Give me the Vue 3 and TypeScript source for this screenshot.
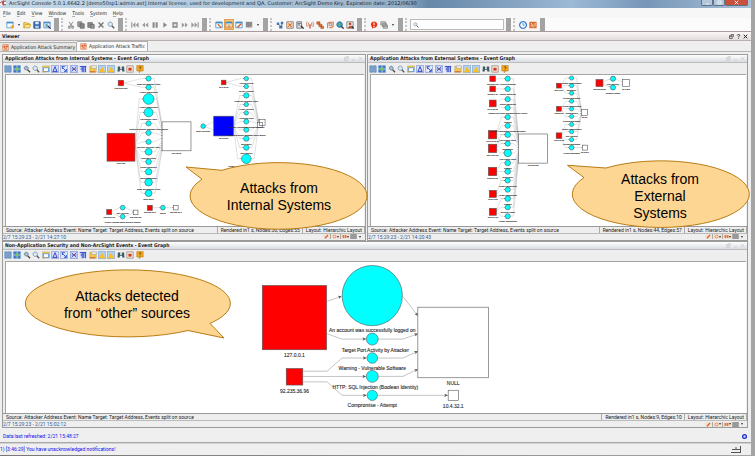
<script setup lang="ts">
interface Shape { d: string; f?: string; s?: string; w?: number }
interface Circle { x: number; y: number; r: number; label?: string; dy?: number; dx?: number }
interface Box { x: number; y: number; s: number; fill: string; label?: string }
interface Graph { view: string; height: number; font: number; circles: Circle[]; boxes: Box[]; edges: string[] }
interface Callout { view: string; w: number; h: number; d: string; x: number; y: number; lines: string[] }
interface Panel {
  id: string; title: string; stats: string; time: string; graph: Graph; callout: Callout
}

const win = 'M1 1.5H9V8.5H1Z'
const icons: Record<string, Shape[]> = {
  newWin: [{ d: win, f: '#f4f9fd', s: '#5b9bd0' }, { d: 'M1 1H9V3H1Z', f: '#4a90cc' }, { d: 'M8 5V9.5M5.8 7.2H10', s: '#f0a020', w: 1.5 }],
  open: [{ d: 'M1 8.5V2H4L5 3H8V4.5', f: '#f8dc70', s: '#c89a20' }, { d: 'M1 8.5L3 4.5H9.8L8 8.5Z', f: '#ffe98c', s: '#c89a20' }],
  save: [{ d: 'M1 1H9V9H1Z', f: '#3c6eb0', s: '#28508a' }, { d: 'M2.8 1H7.2V4H2.8Z', f: '#dce8f4' }, { d: 'M2.8 6H7.2V9H2.8Z', f: '#b8cce0' }],
  saveWin: [{ d: win, f: '#e8f2fa', s: '#4a88c0' }, { d: 'M1 1H9V3H1Z', f: '#4a90cc' }, { d: 'M3 4H6V7H3Z', f: '#58a0a0' }, { d: 'M6 6L9.5 9.5', s: '#226', w: 1.4 }],
  cut: [{ d: 'M2.5 1L6.8 7M7.5 1L3.2 7', s: '#777' }, { d: 'M2 6.5H4V9H2ZM6 6.5H8V9H6Z', s: '#777' }],
  copy: [{ d: 'M1 1H6V7H1Z', f: '#999', s: '#777' }, { d: 'M4 3.5H9V9H4Z', f: '#888', s: '#666' }],
  paste: [{ d: 'M1 2H7V8H1Z', f: '#888', s: '#777' }, { d: 'M4.5 4.5H9V9H4.5Z', f: '#999', s: '#666' }],
  del: [{ d: 'M2 2L8 8M8 2L2 8', s: '#777', w: 1.8 }],
  find: [{ d: 'M4 1.2A2.8 2.8 0 1 0 4.1 1.2Z', f: '#d8e8f4', s: '#7890a8' }, { d: 'M6 6L9 9', s: '#555', w: 1.6 }],
  first: [{ d: 'M1 1.5V8.5', s: '#888', w: 1.2 }, { d: 'M5.5 1.5V8.5L2 5ZM9.5 1.5V8.5L6 5Z', f: '#999' }],
  rew: [{ d: 'M5 1.8V8.2L1.5 5ZM9 1.8V8.2L5.5 5Z', f: '#999' }],
  pause: [{ d: 'M2 1.5H4.5V8.5H2ZM5.8 1.5H8.3V8.5H5.8Z', f: '#888' }],
  play: [{ d: 'M3 1.5L7.5 5L3 8.5Z', f: '#888' }],
  stop: [{ d: 'M2.5 2.5H7.5V7.5H2.5Z', f: '#ddd', s: '#888', w: 1.6 }],
  fwd: [{ d: 'M1 1.8V8.2L4.5 5ZM5 1.8V8.2L8.5 5Z', f: '#999' }],
  last: [{ d: 'M.5 1.5V8.5L4 5ZM4.5 1.5V8.5L8 5Z', f: '#999' }, { d: 'M9 1.5V8.5', s: '#888', w: 1.2 }],
  winCursor: [{ d: win, f: '#fff', s: '#3c8cc8' }, { d: 'M1 1H9V3H1Z', f: '#3c8cc8' }, { d: 'M3.5 4L7.5 8', s: '#d06020', w: 1.6 }],
  winList: [{ d: win, f: '#f8efe0', s: '#c87828' }, { d: 'M1 1H9V3H1Z', f: '#3c8cc8' }, { d: 'M3 5H7M3 7H7', s: '#c87828' }],
  winEdit: [{ d: win, f: '#fff', s: '#3c8cc8' }, { d: 'M1 1H9V3H1Z', f: '#3c8cc8' }, { d: 'M3 8L8 3.5', s: '#d06020', w: 1.8 }],
  winGray: [{ d: 'M1 1H9V8H1Z', f: '#8c8c8c' }, { d: 'M5 9.5L9.5 5', s: '#bbb', w: 1.2 }],
  nodes: [{ d: 'M1 2H4V5H1ZM6 1H9V4H6ZM4 6H8V9.5H4Z', f: '#3c78b8' }, { d: 'M3 4L6 7L8 3', s: '#446', w: .8 }],
  badge: [{ d: 'M1 1H9V9H1Z', f: '#f8eee4', s: '#806050' }, { d: 'M2.5 7L7.5 3M3 3L7 7.5', s: '#e06a20', w: 1.5 }],
  docFind: [{ d: 'M1 1H7V9H1Z', f: '#dde4dc', s: '#667' }, { d: 'M2 3H6M2 5H5', s: '#556' }, { d: 'M6 6L9.5 9.5', s: '#333', w: 1.6 }],
  antenna: [{ d: 'M5 4V9.5', s: '#c04020', w: 1.5 }, { d: 'M3.5 2Q2 4 3.5 6M6.5 2Q8 4 6.5 6M1.5 1Q-.5 4 1.5 7.5M8.5 1Q10.5 4 8.5 7.5', s: '#c06040', w: .9 }],
  chain: [{ d: 'M1 1H5V4H1ZM3.5 4H7.5V7H3.5ZM6 6.5H9.5V9.5H6Z', f: '#e07030', s: '#a04418', w: .6 }],
  loop: [{ d: 'M2 9V4Q2 1.5 5 1.5H9V5Q9 8.5 5 8.5H4', s: '#e07a38', w: 1.4 }, { d: 'M4 3H7V6H4Z', f: '#dde8f0', s: '#889' }],
  globe: [{ d: 'M4.5 1A3.5 3.5 0 1 0 4.6 1Z', f: '#3c98d8', s: '#2868a0' }, { d: 'M2.5 3L5 2.5L6 5L4 7Z', f: '#60b848' }, { d: 'M6.5 6.5L9.5 9.5', s: '#333', w: 1.6 }],
  user: [{ d: 'M1 1H9V9H1Z', f: '#eee', s: '#777' }, { d: 'M5 2A1.7 1.7 0 1 0 5.1 2ZM2 9Q5 3.5 8 9Z', f: '#b84a28' }, { d: 'M7 6L9.5 9.5', s: '#223', w: 1.4 }],
  alert: [{ d: 'M5 .5A4.2 4 0 1 1 4 8.4L2.5 9.8V7.5A4.2 4 0 0 1 5 .5Z', f: '#ee3010' }, { d: 'M5 2V5.2M5 6.2V7.4', s: '#fff', w: 1.4 }],
  stack: [{ d: 'M1 1H7V5H1ZM3 3H8V7H3ZM4 5H9.5V9H4Z', f: '#c8ccd0', s: '#888' }],
  clock: [{ d: 'M5 .8A4.2 4.2 0 1 0 5.1 .8Z', f: '#fff', s: '#2c78d0', w: 1.5 }, { d: 'M5 2.5V5.2H7.2', s: '#2c78d0' }],
  flag: [{ d: 'M.5 1H9.5V9H.5Z', f: '#d86830' }, { d: 'M2.5 2.5L4 4L2.5 7M7.5 2.5V7M5 4.5V8', s: '#f8e0c0', w: 1.2 }],
  tab: [{ d: 'M1 1H9V9H1Z', f: '#fbe8dc', s: '#d07850' }, { d: 'M2.5 3H4.5V5H2.5ZM6 2.5H7.7V4.5H6ZM3 6L7.5 8M7.5 5.5L3 8', f: '#d85a20', s: '#d85a20', w: .9 }],
  cols: [{ d: 'M1 1H4.3V9H1ZM5.5 1H9V9H5.5Z', f: '#7ba3d0', s: '#4a7ab0', w: .7 }],
  fit: [{ d: 'M.5 .5H9.5V9.5H.5Z', f: '#3d78c8' }, { d: 'M3 3H7V7H3Z', f: '#7cc860' }, { d: 'M.5 5H3M7 5H9.5M5 .5V3M5 7V9.5', s: '#cfe4ff', w: 1 }],
  zoomIn: [{ d: 'M4 1.5A2.4 2.4 0 1 0 4.1 1.5Z', f: '#a8c0d4', s: '#607890' }, { d: 'M5.8 6L8.8 9', s: '#444', w: 1.6 }],
  image: [{ d: 'M.5 1H9.5V9H.5Z', f: '#6aa4dc' }, { d: 'M.5 1H9.5V3H.5Z', f: '#f0c040' }, { d: 'M2.5 4H7.5V7.5H2.5Z', f: '#fff' }, { d: 'M.5 8.5H4', s: '#f09830', w: 1.5 }],
  hier: [{ d: 'M.5 .5H9.5V9.5H.5Z', f: '#d8e0fa', s: '#6a80c8', w: .7 }, { d: 'M5 2L2.5 8M5 2L7.5 8M2 8H8', s: '#2038c0', w: 1.1 }],
  ortho: [{ d: 'M.5 .5H9.5V9.5H.5Z', f: '#dfe6fa', s: '#6a80c8', w: .7 }, { d: 'M2 2L8 8M3 5V2H6M5 8H8V5', s: '#2850c8', w: 1.1 }],
  mesh: [{ d: 'M.5 .5H9.5V9.5H.5Z', f: '#cdd8fa', s: '#6a80c8', w: .7 }, { d: 'M2 2L8 8M8 2L2 8M2 5H8', s: '#3a58d0', w: 1.1 }, { d: 'M4 4H6V6H4Z', f: '#c04040' }],
  tree: [{ d: 'M.5 .5H9.5V9.5H.5Z', f: '#dde4fb' }, { d: 'M1 2H9M4 2V9M6 2V9M8 2V9M2 5H4', s: '#2842c4', w: 1.2 }],
  folder: [{ d: 'M1 1.5H9V9H1Z', f: '#f4c84c', s: '#b89050', w: .6 }, { d: 'M3 1H9.5V4H3Z', f: '#f8f0dc', s: '#8898b0', w: .6 }, { d: 'M1 8.5H8', s: '#d06838', w: 1.4 }],
  warn: [{ d: 'M.5 .5H9.5V9.5H.5Z', f: '#b4d0ee', s: '#5a88c0', w: .6 }, { d: 'M5 2L9 9H1Z', f: '#f8c020' }],
  bino: [{ d: 'M1 2H4V5H6V2H9V5L9.5 8H6.5V6H3.5V8H.5L1 5Z', f: '#3c5a62' }],
  rec: [{ d: 'M1 1H9V9H1Z', f: '#f2e6e0', s: '#8c7a70', w: .8 }, { d: 'M3 3.5H7V7H3Z', f: '#d83818' }],
  help: [{ d: 'M1 .5H9V7.5H6L4 9.8V7.5H1Z', f: '#f4a820', s: '#b07010', w: .6 }, { d: 'M3.5 2.8Q5 1.4 6.3 2.8Q6.3 4 5 4.5V5.2M5 6V7', s: '#5a3800', w: .9 }],
  float: [{ d: 'M3.5 1H9V5.5M1 3.5H6.5V9H1ZM1 4.5H6.5', s: 'currentColor', w: 1.2 }],
  question: [{ d: 'M2.5 3Q2.5 1 5 1Q7.5 1 7.5 3Q7.5 4.5 5 5.2V6.5M5 7.8V9.2', s: 'currentColor', w: 1.6 }],
  min: [{ d: 'M2 8H8', s: 'currentColor', w: 1.5 }],
  close: [{ d: 'M1.5 1.5L8.5 8.5M8.5 1.5L1.5 8.5', s: 'currentColor', w: 2 }],
  max: [{ d: 'M2 2H8V8H2Z', s: 'currentColor', w: 1.5 }],
}

const menus: string[] = ['File', 'Edit', 'View', 'Window', 'Tools', 'System', 'Help']
const groups: string[][] = [
  ['newWin', 'drop', 'open', 'save', 'saveWin'],
  ['cut', 'copy', 'paste', 'del', 'find'],
  ['first', 'rew', 'pause', 'play', 'stop', 'fwd', 'last'],
  ['winCursor', 'winList', 'winEdit', 'winGray', 'drop'],
  ['nodes', 'badge', 'docFind', 'antenna', 'chain', 'loop', 'globe', 'user'],
  ['alert', 'stack', 'drop'],
  ['search'],
  ['clock', 'flag'],
]
const graphTools: string[] = ['cols', 'fit', 'zoomIn', 'find', 'image', 'hier', 'ortho', 'mesh', 'tree', 'folder', 'warn', 'warn', 'bino', 'rec', 'help']

const RED = '#ff0000'
const BLUE = '#0000ff'
const WHITE = '#ffffff'

function column(x: number, rows: [number, number, string][]): Circle[] {
  return rows.map(([y, r, label]) => ({ x, y, r, label }))
}
// Links every circle of a column to the left side of a box, spread over its height.
function fan(list: Circle[], x: number, top: number, bottom: number): string[] {
  const step = list.length > 1 ? (bottom - top) / (list.length - 1) : 0
  return list.map((c, i) => `M${c.x + c.r} ${c.y}L${c.x + c.r + 3} ${c.y}L${x} ${top + i * step}`)
}
function from(x: number, y: number, list: Circle[]): string[] {
  return list.map((c) => `M${x} ${y}L${c.x - c.r - 4} ${c.y}L${c.x - c.r} ${c.y}`)
}

const a = column(148, [
  [78.5, 2.6, 'Cross Site Scripting Attack'], [87.3, 2.6, 'Header Manipulation'], [99, 5.4, 'Header Manipulation'],
  [112.5, 4.5, 'Log Forging Attack'], [123.5, 2.6, 'Method Call Failure Database Query Failure'], [133, 2.6, ''],
  [142, 2.6, 'Directory Traversal Attack'], [152, 3.4, 'Directory Listing'], [162, 2.8, 'Cookie Tampering'],
  [172, 3.2, 'Forceful Browsing'], [182.5, 3.8, 'Cross Site Scripting Attack'], [193.5, 3.4, 'Brute Force'],
])
const b = column(246, [
  [78.6, 2.2, 'Account Locked'], [86.5, 2.2, 'Privacy Violation'], [95.5, 2.7, 'Cross Site Scripting Attack'],
  [104.5, 2.2, 'Header Injection'], [113, 2.2, 'Attempted Login'], [121.7, 2.5, 'Possible Authorization Bypass Exception'],
  [130, 2.5, 'Method Call Failure Database Query Failure'], [138.8, 2.7, 'Brute Force'], [147.8, 2.7, 'SQL Injection'],
  [159, 4.8, 'Privacy Violation Social Security Number'],
])
const c = column(507.5, [
  [78.7, 2.6, 'Forceful Browsing'], [89, 2.6, 'Cookie Tampering'], [99.3, 2.6, 'Cookie Tampering'],
  [108, 2.6, 'Method Call Failure Database Query Failure'], [117.3, 2.6, 'Phishing'], [126, 2.6, 'Possible Authorization Bypass Exception'],
  [135, 2.8, 'Log Forging Attack'], [144, 2.6, 'Brute Force'], [153.4, 3.7, 'Log Forging Attack'], [163.4, 2.8, 'Phishing'],
  [172, 2.8, 'Brute Force'], [181, 2.6, 'Header Manipulation'], [190.3, 2.6, 'Header Manipulation'],
  [199.3, 2.8, 'Phishing'], [208, 2.6, 'Directory Listing'], [217, 2.6, 'Header Manipulation'],
])
const d = column(571.7, [
  [78, 2.1, 'System Compromised'], [85.7, 2.1, 'Escalation'], [93.3, 2.1, 'Privilege Escalation'],
  [101.3, 2.1, 'Access Compromised'], [109, 2.1, 'Compromised'], [116.7, 2.1, 'Privilege Escalation'],
  [124.7, 2.1, 'System Compromised'], [132, 2.1, 'SQL Injection'], [140, 2.1, 'Privilege Escalation'], [148, 2.4, 'Account Escalation'],
])

const internal: Graph = {
  view: '5 75 359 151', height: 151, font: 2,
  circles: [...a, ...b,
    { x: 202.7, y: 126.3, r: 2.3, label: 'Buffer Overflow' },
    { x: 122, y: 208, r: 2.4, label: 'SQL Injection' }, { x: 122, y: 217, r: 2.4, label: 'Privacy Violation Social Security Number' },
    { x: 162.3, y: 208, r: 2.4, label: 'Failed' }],
  boxes: [
    { x: 117.5, y: 80.3, s: 5.5, fill: RED, label: '192.168.10.21' }, { x: 106.3, y: 133.4, s: 28, fill: RED, label: '10.0.0.25' },
    { x: 161.5, y: 122, s: 29, fill: WHITE, label: '10.0.20.12' }, { x: 106, y: 210, s: 5, fill: RED, label: '192.168.1.12' },
    { x: 132.7, y: 210.5, s: 4.6, fill: WHITE, label: '192.168.0.20' }, { x: 146.7, y: 205.7, s: 5, fill: RED, label: '192.168.10.2' },
    { x: 173, y: 205.7, s: 4.6, fill: WHITE, label: '192.168.10.3' }, { x: 221, y: 80.2, s: 4.6, fill: RED, label: '10.0.10.15' },
    { x: 213.3, y: 116.3, s: 19.8, fill: BLUE, label: '10.0.10.21' }, { x: 257, y: 122.5, s: 5, fill: WHITE }, { x: 259, y: 119.7, s: 5.8, fill: 'none' }],
  edges: [...from(123, 83, a.slice(0, 2)), ...from(134.3, 145, a.slice(2)), ...fan(a, 161.5, 124, 150),
    ...from(225.7, 82.5, b.slice(0, 2)), ...from(233.2, 126, b.slice(2)), ...fan(b, 258, 120, 127),
    'M213 122L205 126', 'M213 130L205 127', 'M111 212L119 208', 'M111 213L119 217', 'M124.5 208L133 212', 'M124.5 217L133 213',
    'M152 208H160', 'M165 208H173'],
}
const external: Graph = {
  view: '370 75 377 151', height: 151, font: 2,
  circles: [...c, ...d, { x: 613.3, y: 78.7, r: 2.6, label: 'SQL Injection' }, { x: 613.3, y: 87.5, r: 2.6, label: 'Session Fixation' }],
  boxes: [
    { x: 489.5, y: 76, s: 5.6, fill: RED, label: '192.168.1.22' }, { x: 489.5, y: 86.2, s: 5.6, fill: RED, label: '10.168.1.24' },
    { x: 489, y: 100.2, s: 6.8, fill: RED, label: '69.46.23.21' }, { x: 488, y: 130.8, s: 8.4, fill: RED, label: '193.142.12.24' },
    { x: 488, y: 144.6, s: 8.4, fill: RED, label: '201.47.54.72' }, { x: 488, y: 167.8, s: 8.4, fill: RED, label: '65.55.21.12' },
    { x: 489, y: 191, s: 7, fill: RED, label: '12.24.6.20' }, { x: 489, y: 209, s: 7, fill: RED, label: '10.36.74.12' },
    { x: 518.3, y: 134.3, s: 29.3, fill: WHITE, label: '10.0.20.125' },
    { x: 556.5, y: 83.3, s: 4.8, fill: RED, label: '201.47.54' }, { x: 556.5, y: 106.6, s: 4.8, fill: RED, label: '192.20.10' },
    { x: 556.2, y: 133.2, s: 5.6, fill: RED, label: '193.142.12' }, { x: 581.5, y: 109.5, s: 6.2, fill: WHITE, label: '10.0.2' },
    { x: 582.5, y: 145.5, s: 5, fill: WHITE, label: '10.0.20.1' }, { x: 596.2, y: 79.6, s: 7, fill: RED, label: '192.168.20.21' },
    { x: 623, y: 79.6, s: 7, fill: WHITE, label: '10.0.20.1' }],
  edges: [...from(495, 79, c.slice(0, 1)), ...from(495, 89, c.slice(1, 2)), ...from(496, 104, c.slice(2, 4)),
    ...from(496, 134, c.slice(4, 8)), ...from(496, 149, c.slice(6, 9)), ...from(496, 172, c.slice(9, 12)),
    ...from(496, 195, c.slice(11, 14)), ...from(496, 212, c.slice(13)), ...fan(c, 518.3, 138, 160),
    ...from(561, 86, d.slice(0, 3)), ...from(561, 109, d.slice(3, 6)), ...from(561, 136, d.slice(6)), ...fan(d.slice(0, 9), 581.5, 110, 115),
    'M574 148H582', 'M603 82L610 79', 'M603 84L610 87', 'M616 79L623 82', 'M616 87L623 84'],
}
const other: Graph = {
  view: '5 262 742 152', height: 152, font: 5,
  circles: [
    { x: 372.3, y: 295.7, r: 30.2, label: 'An account was successfully logged on', dy: 37 },
    { x: 372.3, y: 339.3, r: 6, label: 'Target Port Activity by Attacker', dx: 3, dy: 13 },
    { x: 372.3, y: 358.3, r: 5.3, label: 'Warning - Vulnerable Software', dy: 12 },
    { x: 372.3, y: 376.7, r: 6, label: 'HTTP: SQL Injection (Boolean Identity)', dx: 3, dy: 13 },
    { x: 372.3, y: 395.7, r: 5.2, label: 'Compromise - Attempt', dy: 12 }],
  boxes: [
    { x: 262, y: 285.5, s: 64.5, fill: RED, label: '127.0.0.1' }, { x: 286, y: 368.8, s: 16.6, fill: RED, label: '92.235.36.96' },
    { x: 418, y: 307.3, s: 70.8, fill: WHITE, label: 'NULL' }, { x: 448.4, y: 390.6, s: 10.2, fill: WHITE, label: '10.4.32.1' }],
  edges: ['M327 301.5L341.5 296.3', 'M327 334L342 339.3H366', 'M303 371.5H327L342 358.3H366.5', 'M303 376.8H366', 'M303 382.2H327L342 395.7H366.5',
    'M403 296.5L418 316', 'M378.5 339.3H403L418 334', 'M378 358.3H403L418 351.5', 'M378.5 376.7H403L418 369.5', 'M378 395.7H448'],
}

const panels: Panel[] = [
  {
    id: 'internal', title: 'Application Attacks from Internal Systems - Event Graph', stats: 'Rendered in1 s, Nodes:36, Edges:55',
    time: '2/7 15:29:23 - 2/21 14:27:10', graph: internal,
    callout: { view: '184 161 185 70', w: 185, h: 70, d: 'M222 171.3L186 168L202 180.2A88.5 33.3 0 1 0 222 171.3Z', x: 279, y: 194, lines: ['Attacks from', 'Internal Systems'] },
  },
  {
    id: 'external', title: 'Application Attacks from External Systems - Event Graph', stats: 'Rendered in1 s, Nodes:44, Edges:57',
    time: '2/7 15:29:23 - 2/21 14:20:43', graph: external,
    callout: { view: '566 160 185 70', w: 185, h: 70, d: 'M606 169L567.5 166.3L584 178.6A88.5 33.3 0 1 0 606 169Z', x: 660, y: 185, lines: ['Attacks from', 'External', 'Systems'] },
  },
  {
    id: 'other', title: 'Non-Application Security and Non-ArcSight Events - Event Graph', stats: 'Rendered in1 s, Nodes:9, Edges:10',
    time: '2/7 15:29:23 - 2/21 15:02:12', graph: other,
    callout: { view: '23 269 209 72', w: 209, h: 72, d: 'M210 324.4L224 339L188 331.5A102.5 33.5 0 1 1 210 324.4Z', x: 127, y: 302, lines: ['Attacks detected', 'from “other” sources'] },
  },
]
const source = 'Source: Attacker Address Event: Name Target: Target Address, Events split on source'
</script>

<template>
  <div class="desktop">
    <div class="window">
      <header class="titlebar">
        <svg class="ico" viewBox="0 0 10 10" aria-hidden="true"><path d="M0 1H10V9H0Z" fill="#fff" /><path d="M0 5L4 2V8M6 1V9M6 2H10M6 8H10" fill="none" stroke="#a03030" stroke-width="1.5" /></svg>
        <h1>ArcSight Console 5.0.1.6642.2 [demo50sp1:admin.ast] Internal license, used for development and QA. Customer: ArcSight Demo Key, Expiration date: 2012/06/30</h1>
        <div class="winbtns">
          <button v-for="n in ['min', 'max', 'close']" :key="n" :class="n" :aria-label="n">
            <svg class="glyph" viewBox="0 0 10 10"><path v-for="(s, i) in icons[n]" :key="i" :d="s.d" fill="none" stroke="currentColor" :stroke-width="s.w" /></svg>
          </button>
        </div>
      </header>

      <nav class="menubar">
        <button v-for="m in menus" :key="m"><u>{{ m[0] }}</u>{{ m.slice(1) }}</button>
      </nav>

      <div class="toolbar">
        <div v-for="(g, gi) in groups" :key="gi" class="group">
          <template v-for="(n, i) in g" :key="i">
            <label v-if="n === 'search'" class="search">
              <svg class="ico" viewBox="0 0 10 10" aria-hidden="true"><path v-for="(s, k) in icons.find" :key="k" :d="s.d" :fill="s.f || 'none'" :stroke="s.s" :stroke-width="s.w || 1" /></svg>
              <input type="text" aria-label="Search">
            </label>
            <button v-else-if="n === 'drop'" class="drop" aria-label="More"></button>
            <button v-else class="tool" :class="{ active: n === 'winList' }" :aria-label="n">
              <svg class="ico" viewBox="0 0 10 10"><path v-for="(s, k) in icons[n]" :key="k" :d="s.d" :fill="s.f || 'none'" :stroke="s.s" :stroke-width="s.w || 1" /></svg>
            </button>
          </template>
        </div>
      </div>

      <div class="viewer">
        <h2>Viewer</h2>
        <div class="acts dark">
          <button v-for="n in ['float', 'question', 'close']" :key="n" :aria-label="n">
            <svg class="glyph" viewBox="0 0 10 10"><path v-for="(s, i) in icons[n]" :key="i" :d="s.d" fill="none" stroke="currentColor" :stroke-width="s.w" /></svg>
          </button>
        </div>
      </div>

      <div class="tabs" role="tablist">
        <button v-for="(t, ti) in ['Application Attack Summary', 'Application Attack Traffic']" :key="t" role="tab" :aria-selected="ti === 1" :class="{ on: ti === 1 }">
          <svg class="ico" viewBox="0 0 10 10" aria-hidden="true"><path v-for="(s, k) in icons.tab" :key="k" :d="s.d" :fill="s.f || 'none'" :stroke="s.s" :stroke-width="s.w || 1" /></svg>
          <span>{{ t }}</span>
        </button>
      </div>

      <main class="work">
        <section v-for="p in panels" :key="p.id" class="panel" :class="p.id">
          <header class="phead">
            <h3>{{ p.title }}</h3>
            <div class="acts">
              <button v-for="n in ['float', 'min', 'close']" :key="n" :aria-label="n">
                <svg class="glyph" viewBox="0 0 10 10"><path v-for="(s, i) in icons[n]" :key="i" :d="s.d" fill="none" stroke="currentColor" stroke-width="1" /></svg>
              </button>
            </div>
          </header>
          <div class="gtools">
            <button v-for="(n, i) in graphTools" :key="i" :aria-label="n">
              <svg class="ico" viewBox="0 0 10 10"><path v-for="(s, k) in icons[n]" :key="k" :d="s.d" :fill="s.f || 'none'" :stroke="s.s" :stroke-width="s.w || 1" /></svg>
            </button>
          </div>
          <div class="canvas">
            <svg class="graph" :class="{ tiny: p.graph.font === 2 }" :viewBox="p.graph.view" preserveAspectRatio="xMinYMin meet">
              <defs>
                <marker :id="'tip-' + p.id" viewBox="0 0 4 4" refX="4" refY="2" :markerWidth="p.graph.font === 2 ? 4 : 8" :markerHeight="p.graph.font === 2 ? 4 : 7" orient="auto"><path d="M0 0L4 2L0 4L1 2Z" fill="#555" /></marker>
              </defs>
              <path v-for="(e, i) in p.graph.edges" :key="'e' + i" class="edge" :d="e" :marker-end="`url(#tip-${p.id})`" />
              <g v-for="(q, i) in p.graph.boxes" :key="'b' + i">
                <rect :x="q.x" :y="q.y" :width="q.s" :height="q.s" :fill="q.fill" />
                <text v-if="q.label" :x="q.x + q.s / 2" :y="q.y + q.s + p.graph.font * 1.5">{{ q.label }}</text>
              </g>
              <circle v-for="(n, i) in p.graph.circles" :key="'c' + i" :cx="n.x" :cy="n.y" :r="n.r" />
              <text v-for="(n, i) in p.graph.circles" :key="'t' + i" :x="n.x + (n.dx || 0)" :y="n.y + (n.dy || n.r + 3.6)">{{ n.label }}</text>
            </svg>
          </div>
          <footer class="status">
            <span class="src">{{ source }}</span>
            <span class="stat">{{ p.stats }}</span>
            <span class="stat">Layout: Hierarchic Layout</span>
          </footer>
          <div class="timebar">
            <span>{{ p.time }}</span>
            <div class="mini">
              <button aria-label="Edit"><svg class="glyph" viewBox="0 0 10 10"><path d="M2 8.5L8 2" stroke="#e06020" stroke-width="2.6" /></svg></button>
              <button aria-label="Chart"><svg class="glyph" viewBox="0 0 10 10"><circle cx="5" cy="5" r="3" fill="none" stroke="#e88850" stroke-width="1.8" /></svg><i></i></button>
              <button aria-label="Columns"><svg class="glyph" viewBox="0 0 10 10"><path d="M1 2H4V8H1ZM5 2H9V8H5Z" fill="#e07840" /></svg><i></i></button>
              <button class="gray" aria-label="Export"></button>
              <button class="bare" aria-label="More"><i></i></button>
            </div>
          </div>
          <svg class="callout" :viewBox="p.callout.view" :width="p.callout.w" :height="p.callout.h">
            <path :d="p.callout.d" />
            <text :x="p.callout.x" :y="p.callout.y"><tspan v-for="(l, i) in p.callout.lines" :key="l" :x="p.callout.x" :dy="i ? 17 : 0">{{ l }}</tspan></text>
          </svg>
        </section>
      </main>

      <div class="refresh">
        <span>Data last refreshed: 2/21 15:48:27</span>
        <button class="orb" aria-label="Refresh"></button>
      </div>
      <div class="notice">
        <a href="#">1) [3:46:29] You have unacknowledged notifications!</a>
        <svg class="tray" viewBox="0 0 10 7" aria-hidden="true"><path d="M0 6.5H10M1 3.5H9M5 1V4M9.5 0V6.5" fill="none" stroke="#555" /></svg>
      </div>
    </div>
  </div>
</template>

<style>
body { margin: 0; }
</style>

<style scoped>
.desktop, .desktop * { box-sizing: border-box; }
.desktop {
  min-height: 100vh;
  padding: 0 4px 1px 0;
  background: linear-gradient(90deg, #777, #a4a4a4);
  font: 5px/7px "DejaVu Sans Condensed", "DejaVu Sans", sans-serif;
  color: #222;
  display: flex;
  overflow: hidden;
}
.window { flex: 1; min-width: 0; display: flex; flex-direction: column; background: #efefef; }
button { margin: 0; padding: 0; border: 0; background: none; font: inherit; color: inherit; display: flex; align-items: center; justify-content: center; }
h1, h2, h3 { margin: 0; font: inherit; white-space: nowrap; }
.ico { width: 8px; height: 8px; flex: none; display: block; }
.glyph { width: 5px; height: 5px; flex: none; display: block; }

.titlebar { height: 8px; display: flex; gap: 3px; align-items: flex-start; background: linear-gradient(90deg, #c3d8e8 0%, #b2c9dc 30%, #a0b8cd 48%, #8fa9c1 54%, #6688a9 57%, #7f9dbc 66%, #9cb9d6 76%, #7796b8 86%, #a9c0d8 100%); }
.titlebar h1 { font-family: "DejaVu Sans", sans-serif; line-height: 6px; color: #142230; }
.titlebar .ico { width: 6px; height: 6px; }
.winbtns { margin: 0 3px 0 auto; display: flex; }
.winbtns button { width: 12px; height: 6px; border: 1px solid #5b7289; border-top: 0; border-radius: 0 0 2px 2px; background: #b5c8da; color: #fff; }
.winbtns .close { width: 23px; background: #c9503c; }

.menubar { height: 10px; display: flex; align-items: center; gap: 6px; padding-left: 3px; background: #f7f7f8; }
.menubar u { text-underline-offset: 1px; text-decoration-thickness: 1px; text-decoration-color: #aaa; }

.toolbar { height: 14px; display: flex; gap: 2px; background: #fbfbfb; border-bottom: 1px solid #a79c9c; }
.group { display: flex; align-items: center; height: 13px; padding: 0 2px 0 3px; border-left: 2px dotted #c4c4c4; border-right: 5px solid #a3a3a3; background: #f6f6f6; }
.group:first-child { border-left-color: transparent; }
.tool { width: 10px; height: 11px; }
.tool.active { background: #f9c476; outline: 1px solid #e0a050; outline-offset: -1px; }
.drop { width: 7px; height: 10px; }
.drop::after, .mini i { content: ""; border: 1px solid transparent; border-top: 2px solid #333; border-bottom: 0; }
.search { display: flex; align-items: center; gap: 2px; background: #fff; border: 1px solid #bbb; height: 11px; padding-left: 2px; }
.search .ico { width: 6px; height: 6px; }
.search input { width: 82px; border: 0; padding: 0; height: 8px; font: inherit; background: none; outline: none; }

.viewer { height: 9px; display: flex; align-items: center; justify-content: space-between; padding: 0 3px 0 2px; background: linear-gradient(#fbf6f6, #e3dcdc); border-bottom: 1px solid #b8b0b0; }
.viewer h2, .phead h3 { font-weight: bold; }
.acts { display: flex; gap: 2px; color: #bbb; }
.dark { color: #222; }

.tabs { display: flex; align-items: flex-end; height: 11px; border-bottom: 1px solid #b5b5b5; }
.tabs button { height: 9px; gap: 2px; padding: 0 1px 0 2px; border: 1px solid #b0b0b0; border-width: 1px 1px 0 0; background: #e6e6e6; }
.tabs button.on { height: 10px; background: #fafafa; padding: 0 2px 0 3px; }
.tabs .ico { width: 7px; height: 7px; }

.work { flex: 1; display: grid; grid-template-columns: 364fr 381fr; grid-template-rows: auto auto; align-content: start; column-gap: 1px; padding: 2px 3px 1px 2px; }
.panel { position: relative; min-width: 0; display: flex; flex-direction: column; border: 1px solid #9b9b9b; background: #eee; }
.panel.internal { z-index: 2; }
.panel.other { grid-column: 1 / -1; }
.phead { display: flex; align-items: center; justify-content: space-between; height: 8px; padding: 0 2px; background: linear-gradient(#fff, #d9dce2); border-bottom: 1px solid #bcbcbc; }
.gtools { display: grid; grid-template-columns: repeat(15, 1fr); width: 142px; height: 11px; align-items: center; padding-left: 1px; }
.gtools button { justify-content: flex-start; }
.canvas { flex: 1; margin: 0 1px 0 2px; background: #fff; border: 1px solid #a5a5a5; border-width: 1px 0 0 1px; }
.graph { display: block; width: 100%; height: auto; font: 5px "Liberation Sans", sans-serif; }
.graph text { text-anchor: middle; fill: #222; stroke: #333; stroke-width: 0.1; }
.graph.tiny { font-size: 2px; }
.graph rect, .graph circle { stroke: #555; stroke-width: 0.6; }
.graph circle { fill: #00ffff; }
.edge { fill: none; stroke: #888; stroke-width: 0.5; }
.tiny .edge { stroke: #999; stroke-width: 0.3; }

.status { display: flex; height: 7px; gap: 1px; border: 1px solid #999; border-width: 1px 0 0; font-family: Roboto, sans-serif; line-height: 6px; white-space: nowrap; }
.status span { padding: 0 2px; border-right: 1px solid #aaa; }
.status .src { flex: 1; padding-left: 3px; }
.timebar { display: flex; justify-content: space-between; height: 7px; border-top: 1px solid #bbb; line-height: 6px; font-family: Roboto, sans-serif; color: #2f5b93; }
.mini { display: flex; align-items: center; padding-right: 2px; }
.mini button { height: 5px; padding: 0 1px; border: 1px solid #aaa; border-width: 0 1px 0 0; background: #f3e4da; }
.mini .gray { width: 6px; background: #999; }
.mini .bare { width: 6px; border: 0; background: none; }

.callout { position: absolute; z-index: 3; right: -4px; bottom: 10px; overflow: visible; pointer-events: none; }
.external .callout { bottom: 11px; }
.other .callout { right: auto; left: 20px; top: 26px; bottom: auto; }
.callout path { fill: #fed694; stroke: #b97c14; stroke-width: 1; }
.callout text { font: 14px "Liberation Sans", Arial, sans-serif; text-anchor: middle; fill: #000; }

.refresh { height: 13px; display: flex; align-items: center; justify-content: space-between; padding: 0 4px 0 3px; color: #1111ee; font-family: Roboto, sans-serif; border-bottom: 1px solid #a8a8a8; }
.orb { width: 5px; height: 5px; border-radius: 50%; background: radial-gradient(circle, #dfe4ff 0 15%, #1c28c8 50%); }
.notice { height: 12px; display: flex; align-items: center; justify-content: space-between; padding: 0 10px 0 0; border-top: 1px solid #d2d2d2; font-family: Roboto, sans-serif; }
.notice a { color: #1111ee; text-decoration: none; }
.tray { width: 10px; height: 7px; }
</style>
